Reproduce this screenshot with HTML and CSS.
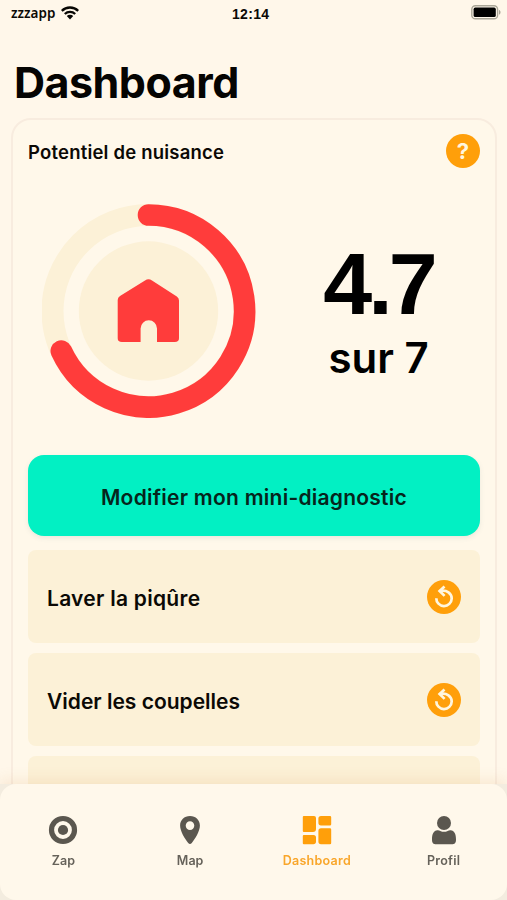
FILE: index.html
```html
<!DOCTYPE html>
<html lang="fr">
<head>
<meta charset="utf-8">
<title>Dashboard</title>
<link rel="stylesheet" href="styles.css">
</head>
<body>
<div class="app">
  <header class="status">
    <div class="carrier"><span>zzzapp</span>
      <svg width="18" height="14" viewBox="0 0 18 14"><g fill="none" stroke="#080704" stroke-width="2.3"><path d="M.8 4.8a11.8 11.8 0 0 1 16.4 0"/><path d="M3.8 8a7.5 7.5 0 0 1 10.4 0"/></g><path d="M5.8 10.1a4.6 4.6 0 0 1 6.4 0L9 13.5z" fill="#080704"/></svg>
    </div>
    <time class="clock">12:14</time>
    <svg class="battery" width="31" height="15" viewBox="0 0 31 15"><rect x="1.800" y=".8" width="25.800" height="13" rx="3.6" fill="none" stroke="#aaa698" stroke-width="1.4"/><rect x="3.600" y="2.6" width="22.2" height="9.4" rx="1.6" fill="#000"/><path d="M29 5.1c2 .7 2 3.9 0 4.6z" fill="#aaa698"/></svg>
  </header>
  <h1 class="title">Dashboard</h1>
  <main class="card">
    <div class="card-head">
      <h2 class="subtitle">Potentiel de nuisance</h2>
      <button class="round help" aria-label="Aide">?</button>
    </div>
    <section class="score">
      <svg class="gauge" width="214" height="214" viewBox="0 0 214 214">
        <circle cx="106.500" cy="107" r="96" fill="none" stroke="#fcf1d7" stroke-width="22"/>
        <circle cx="106.500" cy="107" r="69.7" fill="#fcf1d7"/>
        <path d="M106.500 11A96 96 0 1 1 19.300 147" fill="none" stroke="#ff3c3b" stroke-width="21.6" stroke-linecap="round"/>
        <path d="M78 92 103 76.500Q106.500 74 110 76.500L134.800 92.500Q137 94 137 96.600V134.200Q137 138 132.800 138H115V124.500A8.200 8.200 0 0 0 98.600 124.500V138H79.900Q75.700 138 75.700 134.200V96Q75.700 93.500 78 92Z" fill="#ff3c3b"/>
      </svg>
      <div class="value"><strong class="num">4.7</strong><span class="max">sur 7</span></div>
    </section>
    <button class="primary"><span>Modifier mon mini-diagnostic</span></button>
    <ul class="tasks">
      <li class="task"><span class="t1">Laver la piqûre</span>
        <span class="round"><svg width="34" height="34" viewBox="0 0 34 34" fill="none" stroke="#fff6df" stroke-width="2.7"><path d="M13 10.900C20 9.500 24.700 13.500 24.700 18.500A7.700 7.700 0 0 1 9.300 18.200"/><path d="M17.500 6.400 12.600 11 17.600 15.900"/></svg></span></li>
      <li class="task"><span class="t2">Vider les coupelles</span>
        <span class="round"><svg width="34" height="34" viewBox="0 0 34 34" fill="none" stroke="#fff6df" stroke-width="2.7"><path d="M13 10.900C20 9.500 24.700 13.500 24.700 18.500A7.700 7.700 0 0 1 9.300 18.200"/><path d="M17.500 6.400 12.600 11 17.600 15.900"/></svg></span></li>
      <li class="task"></li>
    </ul>
  </main>
  <div class="dock">
    <nav class="tabs">
      <a class="tab"><svg width="30" height="30" viewBox="0 0 30 30"><circle cx="15" cy="15" r="11.5" fill="none" stroke="#5b574f" stroke-width="5.2"/><circle cx="15" cy="15" r="5.1" fill="#5b574f"/></svg><span>Zap</span></a>
      <a class="tab"><svg width="30" height="30" viewBox="0 0 30 30"><path fill="#5b574f" fill-rule="evenodd" d="M15 1C9.2 1 5.1 5.1 5.1 10.6 5.1 16.4 10 24 13.2 28.1Q15 30.1 16.8 28.1C20 24 24.9 16.4 24.9 10.6 24.9 5.1 20.8 1 15 1ZM15 6.3a4.3 4.3 0 1 1 0 8.6 4.3 4.3 0 0 1 0-8.6Z"/></svg><span>Map</span></a>
      <a class="tab active"><svg width="30" height="30" viewBox="0 0 30 30" fill="#ff9f0a"><path d="M1.8 1H12q2 0 2 2v11q0 3-3 3H1.8q-1 0-1-1V2q0-1 1-1ZM19 1h9q1.2 0 1.2 1.2v7q0 1.2-1.2 1.2h-9q-2.6 0-2.6-2.6V3.6Q16.400 1 19 1ZM1.800 20H11.500q2.500 0 2.500 2.500v4q0 2.700-2.700 2.700H1.800q-1 0-1-1V21q0-1 1-1ZM19 13.300h9q1.200 0 1.200 1.200v13.500q0 1.200-1.200 1.200h-9q-2.600 0-2.600-2.600V16q0-2.700 2.600-2.700Z"/></svg><span class="wide">Dashboard</span></a>
      <a class="tab"><svg width="30" height="30" viewBox="0 0 30 30" fill="#5b574f"><circle cx="15" cy="8" r="7"/><path d="M8.500 15.300Q10 15.200 11.300 15.900 15 17.700 18.700 15.900 20 15.200 21.500 15.300C25.500 15.700 27 19 27 24.500 27 28 25.800 29.200 22.500 29.200H7.500C4.200 29.200 3 28 3 24.500 3 19 4.500 15.700 8.500 15.300Z"/></svg><span class="wide">Profil</span></a>
    </nav>
  </div>
</div>
</body>
</html>
```
FILE: styles.css
```css
* { box-sizing: border-box; }
body {
  margin: 0;
  background: #fff7ea;
  color: #0b0905;
  font-family: Inter, "Liberation Sans", sans-serif;
  font-weight: 600;
}
.app { height: 900px; display: flex; flex-direction: column; overflow: hidden; }
.status {
  flex: none;
  height: 26px;
  padding: 0 6px 0 11px;
  display: grid;
  grid-template-columns: 221px 1fr auto;
  align-items: center;
  font-size: 14px;
}
.carrier { display: flex; align-items: center; gap: 6px; font-family: "Noto Sans", sans-serif; font-size: 13.5px; line-height: 20px; }
.clock { font-weight: 700; font-family: "Liberation Sans", sans-serif; font-size: 14px; letter-spacing: .3px; padding-top: 1px; }
.battery { margin-top: -1px; }
.title { flex: none; margin: 34px 0 0 14px; font-size: 43px; line-height: 44px; letter-spacing: -.5px; font-weight: 650; color: #050402; }
.card {
  flex: none;
  height: 700px;
  margin: 14px 10px 0 11px;
  padding: 14px 15px 0 15px;
  border: 2px solid #f8ecdf;
  border-radius: 20px;
  background: #fff8ea;
}
.card-head { height: 34px; display: flex; justify-content: space-between; align-items: center; }
.subtitle { margin: 0; padding-top: 2px; font-size: 18.500px; font-weight: 600; letter-spacing: .2px; white-space: nowrap; }
.round {
  width: 34px; height: 34px; border: 0; padding: 0;
  border-radius: 50%;
  background: #ff9f0a;
  color: #fff6df;
  display: flex; align-items: center; justify-content: center;
}
.help { font: 700 22px/34px Inter, sans-serif; }
.score { height: 214px; margin: 36px 0 0 14px; display: flex; }
.gauge { flex: none; }
.value { width: 247px; padding: 36px 0 0 21px; display: flex; flex-direction: column; align-items: center; color: #000; }
.num { font: 700 88px/88px "Liberation Sans", sans-serif; letter-spacing: -4px; }
.max { font-size: 42px; line-height: 50px; margin-top: 5px; }
.primary {
  width: 100%; height: 81px; margin-top: 37px; padding: 4px 0 0;
  border: 0; border-radius: 16px;
  background: #02f0c3; color: #06251c;
  font: 600 21px/26px Inter, sans-serif;
  letter-spacing: .25px;
  white-space: nowrap;
  box-shadow: 0 2px 5px rgba(90, 120, 130, .12);
}
.tasks { list-style: none; margin: 14px 0 0; padding: 0; display: flex; flex-direction: column; gap: 10px; }
.task {
  height: 93px; padding: 0 19px 0 19px;
  display: flex; align-items: center; justify-content: space-between;
  border-radius: 8px; background: #fcf1d7;
  font-size: 21px; line-height: 28px;
}
.t1, .t2 { padding-top: 4px; }
.t1 { letter-spacing: .27px; }
.dock { position: fixed; left: 0; right: 0; bottom: 0; height: 116px; background: #f3ecdf; box-shadow: 0 -3px 14px rgba(210, 140, 70, .16); }
.tabs { height: 116px; padding-top: 31px; border-radius: 16px; background: #fff8eb; display: grid; grid-template-columns: repeat(4, 1fr); }
.tab { display: flex; flex-direction: column; align-items: center; color: #66625a; font-size: 12.500px; line-height: 16px; gap: 8px; }
.wide { letter-spacing: .25px; }
.active { color: #f9a62a; }
```
